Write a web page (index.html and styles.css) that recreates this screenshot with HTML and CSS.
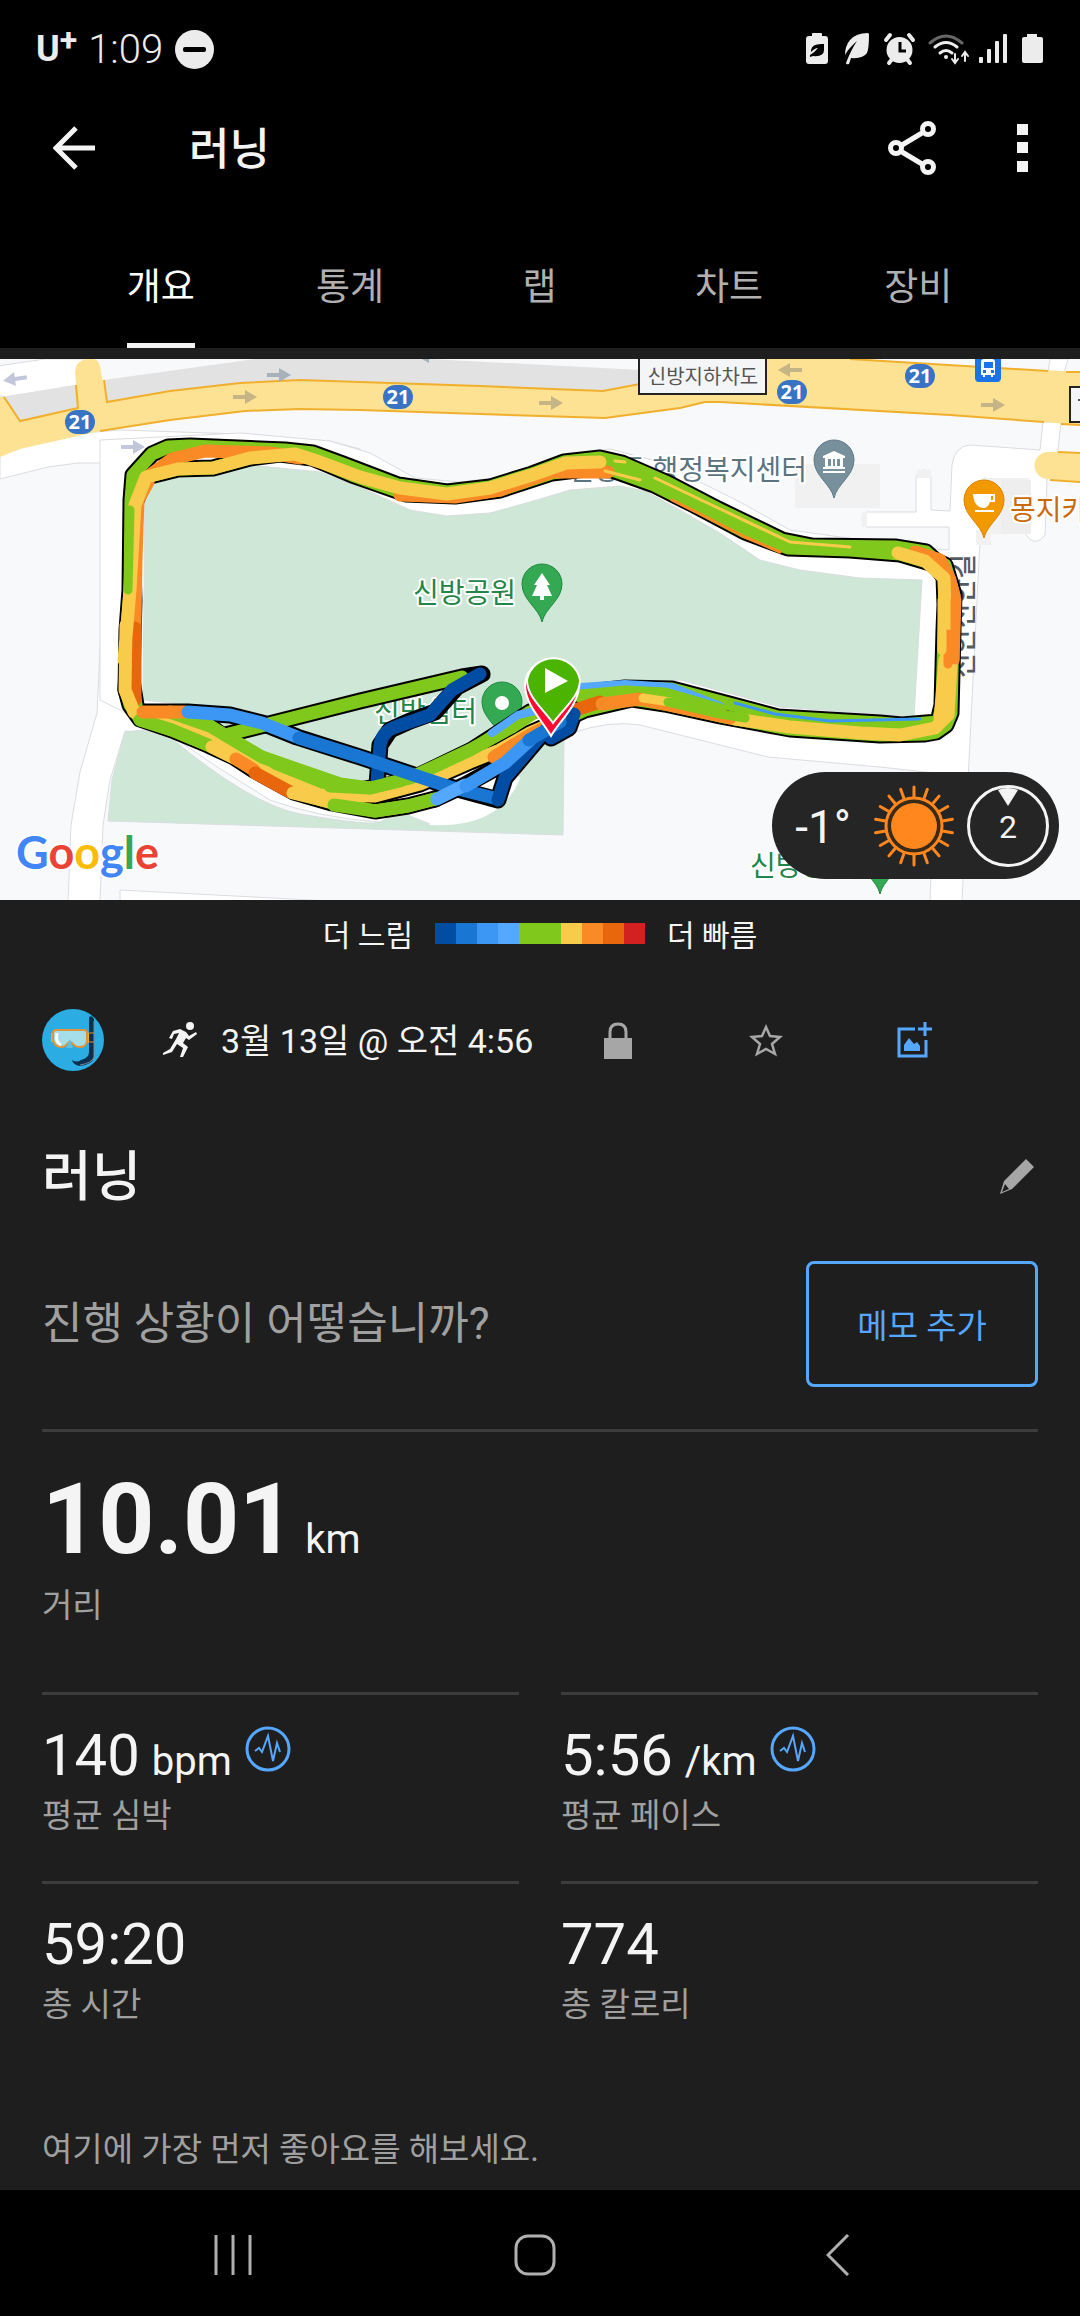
FILE: index.html
```html
<!DOCTYPE html>
<html lang="ko">
<head>
  <meta charset="UTF-8">
  <meta name="viewport" content="width=device-width, initial-scale=1.0">
  <title>러닝</title>
  <link rel="stylesheet" href="styles.css">
</head>
<body>
  <div class="statusbar">
    <span class="carrier">U<sup>+</sup></span>
    <span class="clock">1:09</span>
    <svg class="dnd" width="39" height="39" viewBox="0 0 39 39"><circle cx="19.500" cy="19.500" r="19.500" fill="#ececec"/><rect x="8" y="17" width="23" height="5" rx="2" fill="#000"/></svg>
    <svg class="status-icons" width="240" height="34" viewBox="805 32 240 34" fill="#ececec">
      <path d="M812 36v-2q0-1 1-1h8q1 0 1 1v2h3q3 0 3 3v22q0 3-3 3h-16q-3 0-3-3V39q0-3 3-3z"/>
      <path d="M824 44q-12-1-13 6v2q4-4 7-4-3 4-8 7v2l3-1q11 1 11-6z" fill="#000"/>
      <path d="M868 33q-12 0-18 7-5 6-5 15 3-6 12-14-6 9-11 22 0 2 3 1l2-6q12 1 16-5 2-4 2-19z"/>
      <g><circle cx="899.500" cy="50" r="13"/><path d="M886 40l4-5M913 40l-4-5M889 63l4-5M910 63l-4-5" stroke="#ececec" stroke-width="4" stroke-linecap="round"/><path d="M900 42v9h6" fill="none" stroke="#000" stroke-width="3"/></g>
      <g fill="none" stroke="#ececec" stroke-width="3" stroke-linecap="round">
        <path d="M930 43q16-14 32 0" stroke="#666"/><path d="M935 47q11-9 22 0M940 53q6-5 12 0"/>
        <path d="M955 54v8m-3-3l3 4 3-4M965 61v-8m-3 3l3-4 3 4" stroke-width="2"/>
      </g>
      <circle cx="946" cy="57" r="2"/>
      <rect x="979" y="57" width="4" height="6" rx="1"/><rect x="987" y="49" width="4" height="14" rx="1"/><rect x="995" y="41" width="4" height="22" rx="1"/><rect x="1003" y="34" width="4" height="29" rx="1"/>
      <path d="M1027 37v-3h10v3h4q2 0 2 2v22q0 2-2 2h-17q-2 0-2-2V39q0-2 2-2z"/>
    </svg>
  </div>

  <header class="appbar">
    <button class="icon-btn" aria-label="뒤로"><svg width="42" height="44" viewBox="0 0 42 44" fill="none" stroke="#f4f4f4" stroke-width="5"><path d="M42 22H4M23 2L3 22l20 20"/></svg></button>
    <h1>러닝</h1>
    <button class="icon-btn share" aria-label="공유"><svg width="48" height="54" viewBox="0 0 48 54" fill="none" stroke="#f4f4f4" stroke-width="5"><path d="M14 24l20-12M14 31l20 12"/><circle cx="8" cy="27" r="5.500"/><circle cx="40" cy="8" r="5.500"/><circle cx="40" cy="46" r="5.500"/></svg></button>
    <button class="icon-btn" aria-label="더보기"><svg width="11" height="48" viewBox="0 0 11 48" fill="#f4f4f4"><path d="M0 0h11v11H0zM0 18h11v11H0zM0 37h11v11H0z"/></svg></button>
  </header>

  <nav class="tabs">
    <button class="tab active">개요</button>
    <button class="tab">통계</button>
    <button class="tab">랩</button>
    <button class="tab">차트</button>
    <button class="tab">장비</button>
  </nav>

  <main>
    <div class="map">
      <svg class="map-canvas" viewBox="0 359 1080 541" preserveAspectRatio="xMidYMid slice">
        <defs>
          <path id="pin" d="M0 38C-3 24-20 16-20 0A20 20 0 0 1 20 0C20 16 3 24 0 38z"/>
          <path id="arrow" d="M-12-2H0V-7L12 0 0 7V2H-12z"/>
          <path id="outer" d="M126 690L127 630 130 590 131 500 133 475 152 454 168 447 190 446 285 450 313 453 343 464 398 485 447 492 490 487 532 474 564 462 600 458 622 463 668 483 718 509 782 540 812 546 895 547 926 552 936 561 945 565 954 595 953 630 951 713 946 725 936 732 925 734 880 735 790 729 720 716 665 704 632 699 585 710 545 728"/>
          <path id="inner" d="M136 705L132 680 134 600 132 535 135 503 146 477 178 469 213 468 250 458 280 454 312 458 352 475 406 494 455 496 500 490 552 473 585 469 612 470 654 485 694 505 745 532 788 548 850 550 900 554 934 564 944 577 945 605 944 630 942 705 938 722 902 725 880 723 778 717 733 705 672 689 625 688 580 693 530 712 512 724 472 750 420 775 395 784 360 790 340 788 262 763 240 750 210 726 180 714 138 714"/>
          <path id="lower" d="M128 650L126 690 130 705 140 719 172 730 208 745 234 757 254 770 294 792 332 803 375 811 408 806 435 799"/>
          <path id="middle" d="M145 715L180 722 230 747 270 775 320 795 375 796 420 784 470 762 500 750 530 733 560 720"/>
          <path id="cross" d="M143 712H188L230 715 262 723 297 737 360 757 450 787 498 800 505 778 550 725"/>
          <path id="back" d="M435 799L465 785 505 763 530 740 560 724"/>
          <path id="spur" d="M225 735L360 701 462 677 482 674 457 687 435 712 410 721 390 730 380 745 377 785"/>
          <path id="finish" d="M551 738L569 728 574 714"/>
        </defs>
        <rect y="359" width="1080" height="541" fill="#f8f9fb"/>

        <!-- side streets -->
        <g fill="#fff" stroke="#dadce0" stroke-width="1">
          <path d="M0 440V479L48 467 78 463 109 463 101 630 97 713 80 772 71 825 68 901H100L103 825 110 780 125 731 170 735 400 740V500L360 449 330 441 240 434 120 430z"/>
          <path d="M-2 366L45 359H90L78 385 4 397-2 395z"/>
          <path d="M100 440L240 433 330 441 370 453 415 478 460 482 520 475 570 455 610 449 660 462 740 502 790 530 920 548 949 550V527L866 527Q858 519 866 512L916 512V478Q918 470 924 470 930 470 931 478V510L950 511 952 465Q955 446 970 445L1040 450 1043 422H1061L1058 450 1047 480 1045 535Q1035 548 1026 535L1030 486 984 478 979 560 962 901H930L935 773 880 767 768 757 720 745 640 725Q610 720 572 733L520 740 515 790Q485 828 445 827 410 825 380 822 320 818 270 800 220 770 170 735L100 700z"/>
          <path d="M120 901V890L330 901zM1050 359H1068L1064 373H1048z"/>
        </g>
        <path d="M795 464h85v44h-85zM917 470h14v8h-14zM862 512h5v15h-5zM983 478h46v16h-14v40h-30zM976 530h15v15h-15z" fill="#f1f1f1"/>
        <path d="M1001 480h30v54h-30z" fill="#eee"/>

        <!-- parks -->
        <g fill="#cfe7d7" stroke="#d9dde0" stroke-width="1">
          <path d="M145 475L217 467 260 466 320 472 360 487 410 510 447 516 490 513 530 502 570 490 620 486 645 491 680 510 720 533 760 560 800 570 860 578 922 580 914 717 780 707 680 680 560 690 480 745 400 780 340 780 260 755 220 730 180 704 143 700z"/>
          <path d="M125 732L142 730 170 737Q250 804 300 814 370 826 380 822L400 812 430 824Q490 828 520 770L530 745 564 735 563 835 108 821 112 780z"/>
        </g>
        <path d="M430 818Q495 822 514 775" fill="none" stroke="#fff" stroke-width="14"/>

        <!-- main road -->
        <path d="M104 380L255 359H430L640 370V384L603 391 480 386 300 380 240 383 170 391 107 402zM5 397L76 385 78 408 20 421z" fill="#e2e2e2"/>
        <path d="M0 457L20 449 100 431 170 420 245 411 300 409 360 410 480 414 605 418 680 408 705 402 720 402 950 415 1080 425V372L850 359H767L640 384 603 391 480 386 300 380 240 383 170 391 107 402 101 372Q100 358 90 358 75 360 75 372L78 408 20 421 4 397H0zM1085 452H1048a13 13 0 0 0 0 27L1085 482z" fill="#fde293"/>
        <path d="M104 380L107 402 170 391 240 383 300 380 480 386 603 391 640 384M4 397L20 421 78 408 76 385M100 431L170 420 245 411 300 409 360 410 480 414 605 418 680 408 705 402 720 402 950 415 1044 422M1061 424L1080 425M850 359L1048 371M1066 372h14M1058 452L1080 453M1050 480L1080 482" fill="none" stroke="#f0af2c" stroke-width="2"/>
        <g fill="#c4b486">
          <use href="#arrow" x="245" y="397"/><use href="#arrow" x="551" y="403"/><use href="#arrow" x="993" y="405"/>
          <use href="#arrow" transform="translate(790 370) rotate(180)"/>
        </g>
        <g fill="#c3c7da"><use href="#arrow" transform="translate(15 379) rotate(172)"/><use href="#arrow" x="133" y="447"/></g>
        <use href="#arrow" x="279" y="375" fill="#a6b1b9"/>
        <path d="M422 359h7v4z" fill="#a6b1b9"/>

        <g fill="#3973c4">
          <rect x="65" y="410" width="30" height="24" rx="12"/><rect x="383" y="385" width="30" height="24" rx="12"/>
          <rect x="777" y="380" width="30" height="24" rx="12"/><rect x="905" y="364" width="30" height="24" rx="12"/>
        </g>
        <g class="route-no"><text x="80" y="429">21</text><text x="398" y="404">21</text><text x="792" y="399">21</text><text x="920" y="383">21</text></g>

        <rect x="639" y="352" width="127" height="42" fill="#f4f5f7" stroke="#222" stroke-width="2"/>
        <text class="box-label" x="703" y="384">신방지하차도</text>
        <rect x="1070" y="387" width="80" height="35" fill="#f4f5f7" stroke="#222" stroke-width="2"/>
        <path d="M1078 400h2" stroke="#555" stroke-width="2"/>

        <rect x="975" y="350" width="26" height="32" rx="4" fill="#1a73e8"/>
        <path d="M981 375v-13q0-3 3-3h8q3 0 3 3v13h-2v2h-2v-2h-6v2h-2v-2zM984 362v6h9v-6zM983 370v3h3v-3zM991 370v3h3v-3z" fill="#fff" fill-rule="evenodd"/>

        <!-- places under the track -->
        <text class="place civic" x="807" y="480">신방동 행정복지센터</text>
        <text class="place park" x="477" y="722">신방쉼터</text>
        <text class="street" transform="translate(973 678) rotate(-90)">신안신안길</text>
        <use href="#pin" x="502" y="702" fill="#34a853" stroke="#1e8a40"/><circle cx="502" cy="703" r="7" fill="#fff"/>
        <text class="place park" x="853" y="876">신방공원</text>
        <use href="#pin" x="880" y="856" fill="#34a853" stroke="#1e8a40"/>

        <!-- track outline -->
        <g class="track casing">
          <use href="#outer"/><use href="#inner"/><use href="#lower"/><use href="#middle"/><use href="#spur"/><use href="#cross"/><use href="#back"/><use href="#finish"/>
        </g>
        <!-- track coloured by pace -->
        <g class="track">
          <use href="#outer" stroke="#80c91c"/>
          <use href="#inner" stroke="#80c91c"/>
          <use href="#lower" stroke="#80c91c"/>
          <path d="M134 690L136 560 138 500 148 482M150 475L172 459 205 451 270 453 300 458M400 495L455 497 500 490 552 472 608 472M915 552L940 560 950 580 955 600 953 660" stroke="#f98a25"/>
          <path d="M672 500L700 514 745 537 780 552" stroke="#f98a25" stroke-width="3"/>
          <path d="M135 628V700" stroke="#e9670c"/>
          <path d="M126 625L125 690 134 712M124 660L130 590 135 505 146 477 178 469 213 468 250 458 295 454 320 462 360 477 400 488 447 494 490 488 532 475 566 463 600 462M898 553L925 561 944 578 945 610 944 650M951 665L948 715 935 728 900 735 860 733 790 727 735 719M945 660L940 720" stroke="#f9cb4a"/>
          <path d="M948 634v30M955 600v60" stroke="#f98a25" stroke-width="9"/>
          <path d="M942 600V650" stroke="#f9cb4a" stroke-width="9"/>
          <path d="M128 590L130 510" stroke="#80c91c" stroke-width="9"/>
          <path d="M615 461L625 462M640 480L605 471M655 478L718 508 790 542 850 547" stroke="#f9cb4a" stroke-width="3"/>
          <path d="M735 703L775 714 830 721 920 719" stroke="#3b97f3" stroke-width="3"/>
          <use href="#middle" stroke="#f9cb4a"/>
          <path d="M170 712L210 726 240 744 262 757 340 784 370 788 410 778 470 750 512 727 535 712" stroke="#80c91c"/>
          <path d="M140 720L172 730 208 745" stroke="#80c91c"/>
          <path d="M212 747L234 758" stroke="#f9cb4a"/>
          <path d="M236 759L254 770" stroke="#f98a25"/>
          <path d="M255 773L290 792" stroke="#e9670c"/>
          <path d="M293 793L330 802" stroke="#f9cb4a"/>
          <path d="M334 805L375 811 408 806 435 799" stroke="#80c91c"/>
          <path d="M494 757L530 735 550 725" stroke="#f98a25"/>
          <path d="M492 733L518 715 535 711" stroke="#55a8ff" stroke-width="8"/>
          <path d="M580 687L625 684 672 687 720 706" stroke="#55a8ff" stroke-width="8"/>
          <path d="M580 696L625 692 665 694 720 710" stroke="#80c91c"/>
          <path d="M575 710L600 702" stroke="#e9670c"/><path d="M602 704L640 699 730 718" stroke="#f98a25"/>
          <path d="M643 698L670 702" stroke="#f9cb4a" stroke-width="9"/><path d="M668 702L720 714 745 718" stroke="#80c91c" stroke-width="9"/>
          <path d="M225 735L360 701 462 677" stroke="#80c91c"/>
          <path d="M143 712H185" stroke="#f98a25"/>
          <path d="M377 782L380 745Q382 731 398 726L430 715 452 690 480 674" stroke="#004da3"/>
          <path d="M330 786L370 788 400 781" stroke="#80c91c"/>
          <path d="M188 712L230 715 262 723 297 737" stroke="#3b97f3"/>
          <path d="M299 738L360 757 450 787 494 798" stroke="#1976d2"/>
          <path d="M498 800L505 778 550 725M551 738L569 728 574 714" stroke="#004da3"/>
          <path d="M437 799L465 785" stroke="#55a8ff"/>
          <path d="M466 786L505 763 530 740" stroke="#3b97f3"/>
          <path d="M529 740L560 722" stroke="#1976d2"/>
        </g>

        <!-- places over the track -->
        <text class="place park" x="516" y="603">신방공원</text>
        <use href="#pin" x="542" y="584" fill="#34a853" stroke="#1e8a40"/>
        <path d="M542 573l8 12h-3l5 11h-8v4h-4v-4h-8l5-11h-3z" fill="#fff"/>
        <use href="#pin" x="834" y="460" fill="#78909c" stroke="#5f7a86"/>
        <path d="M823 456l11-5 11 5v2h-2v9h2v2h-22v-2h2v-9h-2zM823 471h22v2h-22z" fill="#fff"/>
        <path d="M828 459h3v7h-3zM833 459h2v7h-2zM837 459h3v7h-3z" fill="#78909c"/>
        <use href="#pin" x="984" y="500" fill="#f29900" stroke="#d98200"/>
        <path d="M973 494h22v8h-5q-2 6-7 6-9-1-10-14zM975 510h19v2h-19z" fill="#fff"/><path d="M991 496h2v4h-2z" fill="#f29900"/>
        <text class="place cafe" x="1010" y="520">몽지카</text>

        <!-- finish and start pins -->
        <path d="M551 736C542 720 526 706 525 686A27 27 0 0 1 579 686C578 706 560 720 551 736z" fill="#ff0a32" stroke="#fff" stroke-width="2"/>
        <path d="M553 723C542 708 527 696 527 680A27 27 0 0 1 580 680C580 696 564 708 553 723z" fill="#4bb400" stroke="#fff" stroke-width="2"/>
        <path d="M545 668l23 13-23 12z" fill="#fff"/>

        <text class="google" x="16" y="869"><tspan fill="#4285f4">G</tspan><tspan fill="#ea4335">o</tspan><tspan fill="#fbbc05">o</tspan><tspan fill="#4285f4">g</tspan><tspan fill="#34a853">l</tspan><tspan fill="#ea4335">e</tspan></text>
      </svg>

      <div class="weather">
        <span class="temp">-1°</span>
        <svg width="82" height="82" viewBox="-41 -41 82 82" stroke="#ff871d" fill="none" stroke-width="3" stroke-linecap="round">
          <circle r="23" fill="#ff871d" stroke="none"/><circle r="25" stroke="#3b2a15" stroke-width="3"/><circle r="28"/>
          <g><path d="M0-29V-39M0 29V39"/><path d="M0-29V-39M0 29V39" transform="rotate(20)"/><path d="M0-29V-39M0 29V39" transform="rotate(40)"/><path d="M0-29V-39M0 29V39" transform="rotate(60)"/><path d="M0-29V-39M0 29V39" transform="rotate(80)"/><path d="M0-29V-39M0 29V39" transform="rotate(100)"/><path d="M0-29V-39M0 29V39" transform="rotate(120)"/><path d="M0-29V-39M0 29V39" transform="rotate(140)"/><path d="M0-29V-39M0 29V39" transform="rotate(160)"/></g>
        </svg>
        <span class="wind">2<svg class="wind-arrow" width="20" height="18" viewBox="0 0 20 18"><path d="M0 2Q10-2 20 2L10 18z" fill="#f4f4f4"/></svg></span>
      </div>
    </div>

    <div class="legend">
      <span>더 느림</span>
      <div class="scale"><i class="c1"></i><i class="c2"></i><i class="c3"></i><i class="c4"></i><i class="c5"></i><i class="c6"></i><i class="c7"></i><i class="c8"></i><i class="c9"></i></div>
      <span>더 빠름</span>
    </div>

    <section class="activity">
      <div class="meta">
        <svg class="avatar" width="62" height="62" viewBox="0 0 62 62">
          <circle cx="31" cy="31" r="31" fill="#2bace2"/>
          <path d="M47 8q3-2 5 2v38q-2 8-14 9-7-1-8-6 5 3 9 0 8-2 8-8z" fill="#0d2f4f"/>
          <path d="M52 12v36q-2 6-14 8" fill="none" stroke="#7d8894"/>
          <path d="M45 24h7M45 33h7" stroke="#e0943a"/><path d="M9 24h3v9H9zM44 24h3v9h-3z" fill="#f5b301"/>
          <path d="M14 21h28q3 0 3 4v7q-1 6-7 6-5 0-7-3-3-4-6 0-2 3-6 3-7-1-8-7v-7q0-3 3-3z" fill="#a5dde8" stroke="#e0943a" stroke-width="2"/>
          <path d="M15 24q-2 9 4 12" fill="none" stroke="#fff" stroke-width="3"/><path d="M28 30l3 9h-7z" fill="#5bbfe0"/>
        </svg>
        <svg class="runner" width="34" height="36" viewBox="0 0 34 36" fill="#f4f4f4"><circle cx="27" cy="4" r="4"/><path d="M10 9l7-2 6 3 3 4 7-4 1 2-8 6-3-2-3 5 5 4-5 10h-3l3-9-6-4-5 8-9 3v-2l7-4 6-10 3-6-5 1-2 5-3-1z"/></svg>
        <span class="date">3월 13일 @ 오전 4:56</span>
        <div class="actions">
          <button class="icon-btn" aria-label="비공개"><svg width="28" height="37" viewBox="0 0 28 37"><path d="M6 17V10Q6 2 14 2T22 10V17" fill="none" stroke="#a6a6a6" stroke-width="3"/><path d="M0 16h28v21H0z" fill="#a6a6a6"/></svg></button>
          <button class="icon-btn" aria-label="즐겨찾기"><svg width="34" height="34" viewBox="0 0 34 34" fill="none" stroke="#a6a6a6" stroke-width="2.500"><path d="M17 4l4 9 10 1-8 7 3 10-9-5-9 5 3-10-8-7 10-1z"/></svg></button>
          <button class="icon-btn" aria-label="사진 추가"><svg width="36" height="36" viewBox="0 0 36 36"><path d="M18 7H2v27h27V18M28 0v14M21 7h14" fill="none" stroke="#56a7ff" stroke-width="3"/><path d="M7 29v-6l5-7 5 6 3-2 3 4v5z" fill="#56a7ff"/></svg></button>
        </div>
      </div>

      <div class="title-row">
        <h2>러닝</h2>
        <button class="icon-btn" aria-label="이름 편집"><svg width="39" height="36" viewBox="0 0 39 36" fill="#a6a6a6"><path d="M27 0l8 8-22 22L1 35 5 22zM6 25l-3 8 7-3z" fill-rule="evenodd"/></svg></button>
      </div>

      <div class="note-row">
        <p>진행 상황이 어떻습니까?</p>
        <button class="note-btn">메모 추가</button>
      </div>

      <div class="distance">
        <div class="big"><strong>10.01</strong> <span class="unit">km</span></div>
        <div class="label">거리</div>
      </div>

      <div class="stats">
        <div class="stat">
          <div class="value">140 <span class="unit">bpm</span><svg class="pulse" width="46" height="46" viewBox="0 0 46 46" fill="none" stroke="#56a7ff" stroke-width="3"><circle cx="23" cy="23" r="21"/><path d="M10 25l4-3 3 4 6-16 5 25 4-18 3 9" stroke-width="2"/></svg></div>
          <div class="label">평균 심박</div>
        </div>
        <div class="stat">
          <div class="value">5:56 <span class="unit">/km</span><svg class="pulse" width="46" height="46" viewBox="0 0 46 46" fill="none" stroke="#56a7ff" stroke-width="3"><circle cx="23" cy="23" r="21"/><path d="M10 25l4-3 3 4 6-16 5 25 4-18 3 9" stroke-width="2"/></svg></div>
          <div class="label">평균 페이스</div>
        </div>
        <div class="stat">
          <div class="value">59:20</div>
          <div class="label">총 시간</div>
        </div>
        <div class="stat">
          <div class="value">774</div>
          <div class="label">총 칼로리</div>
        </div>
      </div>

      <p class="likes">여기에 가장 먼저 좋아요를 해보세요.</p>
    </section>
  </main>

  <div class="navbar">
    <button class="icon-btn" aria-label="최근 앱"><svg width="40" height="42" viewBox="0 0 40 42" stroke="#b0b0b0" stroke-width="3"><path d="M3 1v40M20 1v40M37 1v40"/></svg></button>
    <button class="icon-btn" aria-label="홈"><svg width="42" height="42" viewBox="0 0 42 42" fill="none" stroke="#b0b0b0" stroke-width="3"><rect x="2" y="2" width="38" height="38" rx="12"/></svg></button>
    <button class="icon-btn" aria-label="뒤로 가기"><svg width="24" height="42" viewBox="0 0 24 42" fill="none" stroke="#b0b0b0" stroke-width="3"><path d="M22 1L2 21l20 20"/></svg></button>
  </div>
</body>
</html>
```

FILE: styles.css
```css
* {
  box-sizing: border-box;
}
body {
  margin: 0;
  min-height: 100vh;
  display: flex;
  flex-direction: column;
  background: #000;
  color: #f4f4f4;
  font-family: Roboto, 'Noto Sans CJK KR', sans-serif;
}
h1, h2, p {
  margin: 0;
}
button {
  font-family: inherit;
  background: none;
  border: none;
  padding: 0;
  cursor: pointer;
}
svg {
  display: block;
  flex-shrink: 0;
}
.icon-btn {
  display: flex;
  align-items: center;
  justify-content: center;
}

/* status bar */
.statusbar {
  height: 98px;
  padding: 0 35px 0 36px;
  display: flex;
  align-items: center;
  color: #ececec;
}
.carrier {
  font-family: Roboto, sans-serif;
  font-size: 36px;
  font-weight: 700;
  line-height: 40px;
}
.carrier sup {
  font-size: 32px;
  line-height: 0;
  vertical-align: 10px;
}
.clock {
  margin-left: 11px;
  font-size: 40px;
  font-weight: 300;
}
.dnd {
  margin-left: 12px;
}
.status-icons {
  margin-left: auto;
}

/* app bar */
.appbar {
  height: 100px;
  padding: 0 52px 0 53px;
  display: flex;
  align-items: center;
}
.appbar h1 {
  margin-left: 94px;
  padding-top: 4px;
  font-size: 44px;
  font-weight: 500;
  line-height: 60px;
}
.share {
  margin-left: auto;
  margin-right: 81px;
}

/* tabs */
.tabs {
  height: 150px;
  padding: 0 67px 0 66px;
  display: flex;
}
.tab {
  flex: 1;
  display: flex;
  flex-direction: column;
  align-items: center;
  justify-content: flex-end;
  color: #b0b0b0;
  font-size: 37px;
  line-height: 44px;
}
.tab::after {
  content: '';
  width: 68px;
  height: 5px;
  margin-top: 33px;
}
.tab.active {
  color: #fff;
}
.tab.active::after {
  background: #f4f4f4;
}

main {
  flex: 1;
  padding-top: 11px;
  background: #1e1e1e;
}

/* map */
.map {
  position: relative;
}
.map-canvas {
  width: 100%;
}
.route-no text {
  font: 700 20px 'Open Sans', sans-serif;
  fill: #fff;
  text-anchor: middle;
}
.box-label {
  font-size: 20px;
  fill: #555;
  text-anchor: middle;
}
.place {
  font-size: 28px;
  text-anchor: end;
  stroke: #fff;
  stroke-width: 4px;
  stroke-linejoin: round;
  paint-order: stroke;
}
.park {
  fill: #23854a;
}
.civic {
  fill: #5b7480;
}
.cafe {
  fill: #c96a0c;
  text-anchor: start;
}
.street {
  font-size: 27px;
  font-weight: 500;
  fill: #555b62;
}
.track {
  fill: none;
  stroke-width: 13px;
  stroke-linecap: round;
  stroke-linejoin: round;
}
.casing {
  stroke: #000;
  stroke-width: 17px;
}
.google {
  font: 700 45px Lato, sans-serif;
  stroke: #fff;
  stroke-width: 4px;
  paint-order: stroke;
}
.weather {
  position: absolute;
  right: 21px;
  bottom: 21px;
  height: 107px;
  padding: 0 10px 0 23px;
  display: flex;
  align-items: center;
  border-radius: 54px;
  background: #252525;
}
.temp {
  margin-right: 22px;
  padding-top: 2px;
  font-size: 46px;
}
.wind {
  position: relative;
  width: 82px;
  height: 82px;
  margin-left: 12px;
  border: 3px solid #f4f4f4;
  border-radius: 50%;
  font-size: 32px;
  line-height: 78px;
  text-align: center;
}
.wind-arrow {
  position: absolute;
  top: 0;
  left: 28px;
}

/* pace legend */
.legend {
  height: 66px;
  display: flex;
  align-items: center;
  justify-content: center;
  gap: 22px;
  font-size: 30px;
}
.scale {
  display: flex;
}
.scale i {
  width: 21px;
  height: 21px;
}
.scale .c5 { width: 42px; }
.c1 { background: #004da3; }
.c2 { background: #1976d2; }
.c3 { background: #3b97f3; }
.c4 { background: #55a8ff; }
.c5 { background: #80c91c; }
.c6 { background: #f9cb4a; }
.c7 { background: #f98a25; }
.c8 { background: #e9670c; }
.c9 { background: #d32020; }

/* activity */
.activity {
  padding: 43px 42px 20px;
}
.meta {
  display: flex;
  align-items: center;
}
.runner {
  margin-left: 59px;
}
.date {
  margin-left: 24px;
  padding-top: 2px;
  font-size: 34px;
  line-height: 50px;
  white-space: nowrap;
}
.actions {
  flex: 1;
  margin: 0 49px 0 10px;
  display: grid;
  grid-template-columns: repeat(3, 1fr);
}
.title-row {
  height: 80px;
  margin-top: 66px;
  display: flex;
  align-items: center;
  justify-content: space-between;
}
.title-row h2 {
  padding-top: 2px;
  font-size: 54px;
  font-weight: 500;
  line-height: 80px;
}
.note-row {
  margin-top: 44px;
  padding-bottom: 42px;
  display: flex;
  align-items: center;
  justify-content: space-between;
  border-bottom: 3px solid #3c3c3c;
}
.note-row p {
  color: #a0a0a0;
  font-size: 44px;
  line-height: 60px;
}
.note-btn {
  height: 126px;
  padding: 0 48px;
  border: 3px solid #56a7ff;
  border-radius: 8px;
  color: #56a7ff;
  font-size: 33px;
}
.distance {
  padding: 38px 0 66px;
}
.big {
  height: 100px;
  font-size: 40px;
  line-height: 100px;
}
.big strong {
  font-size: 98px;
  font-weight: 700;
}
.unit {
  font-size: 40px;
}
.label {
  color: #a0a0a0;
  font-size: 33px;
  line-height: 40px;
}
.distance .label {
  margin-top: 16px;
}
.stats {
  display: grid;
  grid-template-columns: 1fr 1fr;
  column-gap: 42px;
}
.stat {
  padding: 25px 0 45px;
  border-top: 3px solid #3c3c3c;
}
.value {
  height: 70px;
  display: flex;
  align-items: baseline;
  font-size: 58px;
  line-height: 70px;
}
.value .unit {
  margin-left: 12px;
}
.pulse {
  align-self: flex-start;
  margin: 6px 0 0 13px;
}
.stat .label {
  margin-top: 6px;
}
.likes {
  margin-top: 60px;
  color: #a0a0a0;
  font-size: 33px;
  line-height: 40px;
}

/* system navigation */
.navbar {
  height: 126px;
  padding: 4px 91px 0 82px;
  display: grid;
  grid-template-columns: repeat(3, 1fr);
}
```
